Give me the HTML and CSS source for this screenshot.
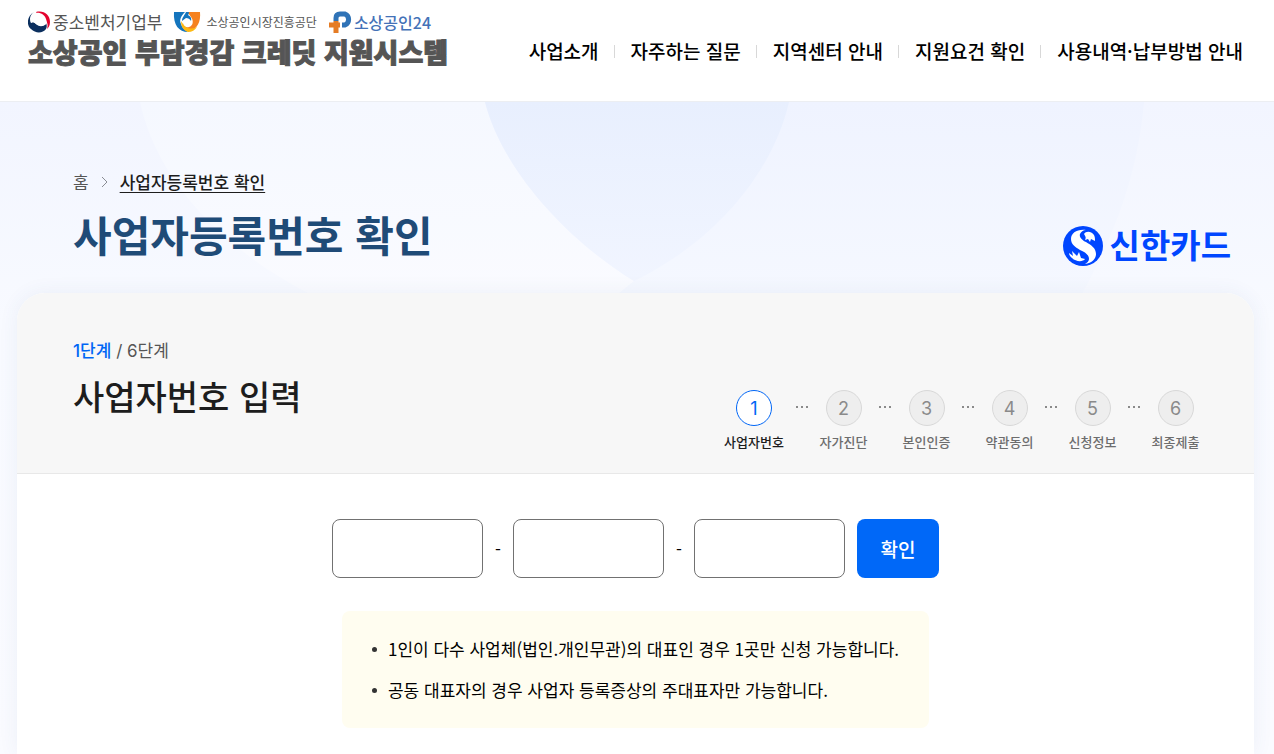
FILE: index.html
```html
<!DOCTYPE html>
<html lang="ko">
<head>
    <meta charset="UTF-8">
    <meta name="viewport" content="width=device-width, initial-scale=1.0">
    <title>소상공인 부담경감 크레딧 지원시스템</title>
    <link rel="stylesheet" href="styles.css">
</head>
<body>
    <header class="header">
        <div class="brand">
            <div class="agencies">
                <a href="#" class="agency agency-mss">
                    <svg width="22" height="22" viewBox="0 0 22 22" aria-hidden="true">
                        <path fill="#e4032e" d="M8 1C16-1 22 4 22 11c0 4-2 6-3 7 1-3 1-7-2-9L9 3z"/>
                        <path fill="#0b2f5e" d="M6 1C-1 5-2 14 3 18c5 5 12 4 15 0 1-2 1-4 0-6-2 4-7 4-10 1-2-2-4-2-5-1C1 8 2 4 6 1z"/>
                        <path fill="#fff" d="M3 12C2 7 4 3 8 2c4-1 9 2 10 6 1 2 1 5-1 6-3 2-6 1-9-1-2-2-4-2-5-1z"/>
                    </svg>
                    중소벤처기업부
                </a>
                <a href="#" class="agency agency-semas">
                    <svg width="28" height="22" viewBox="0 0 28 22" aria-hidden="true">
                        <path fill="#1475bd" d="M1 1h11c-4 4-6 8-4 12 1 4 4 6 7 8C6 21 0 14 1 1z"/>
                        <path fill="#1475bd" d="M17 1h-4c-1 3-4 5-4 9l4-3c2 0 4 1 5 3 1-3-1-5-3-6z"/>
                        <path fill="#f58220" d="M27 1H16c-1 2 1 3 2 5 3 4 2 9-2 10-3 1-6-1-6-4-1 5 3 9 7 8 7-2 11-9 10-19z"/>
                        <path fill="#fdb913" d="M8 10c0 5 2 9 7 11 4 0 7-2 9-5-4 2-8 2-11 0-2-1-3-3-5-6z"/>
                    </svg>
                    소상공인시장진흥공단
                </a>
                <a href="#" class="agency agency-sbiz">
                    <svg width="25" height="23" viewBox="0 0 25 23" aria-hidden="true">
                        <path fill="none" stroke="#2f73b7" stroke-width="5" d="M8 10V7q0-4 4-4h5a6 6 0 0 1 0 11h-3"/>
                        <path fill="none" stroke="#e57c25" stroke-width="5" d="M1 14h11M8 10v12"/>
                    </svg>
                    소상공인24
                </a>
            </div>
            <a href="#" class="system-name">소상공인 부담경감 크레딧 지원시스템</a>
        </div>
        <nav class="nav">
            <a href="#">사업소개</a>
            <a href="#">자주하는 질문</a>
            <a href="#">지역센터 안내</a>
            <a href="#">지원요건 확인</a>
            <a href="#">사용내역·납부방법 안내</a>
        </nav>
    </header>

    <main class="main">
        <svg class="backdrop" viewBox="0 0 1274 360" preserveAspectRatio="xMidYMin slice" aria-hidden="true">
            <defs>
                <linearGradient id="fadeLeft" x1="0" y1="0" x2="0" y2="1">
                    <stop offset="0" stop-color="#f5f8ff"/>
                    <stop offset="1" stop-color="#fafbff"/>
                </linearGradient>
                <linearGradient id="fadeRight" x1="0" y1="0" x2="0" y2="1">
                    <stop offset="0" stop-color="#eff3ff"/>
                    <stop offset="1" stop-color="#f5f8ff"/>
                </linearGradient>
                <linearGradient id="fadeCenter" x1="0" y1="0" x2="0" y2="1">
                    <stop offset="0" stop-color="#e8effe"/>
                    <stop offset="1" stop-color="#f1f5ff"/>
                </linearGradient>
            </defs>
            <path fill="url(#fadeLeft)" d="M140 0C156 76 220 146 310 192H618L634 179C715 140 773 70 789 0z"/>
            <path fill="url(#fadeRight)" d="M485 0C503 70 570 140 634 179L618 192H1082C1110 140 1137 80 1144 0z"/>
            <path fill="url(#fadeCenter)" d="M485 0C503 70 570 140 634 179C715 140 773 70 789 0z"/>
        </svg>

        <div class="page-head">
            <div>
                <nav class="breadcrumb">
                    <a href="#">홈</a>
                    <svg width="7" height="12" viewBox="0 0 7 12" aria-hidden="true">
                        <path fill="none" stroke="#8a8d94" d="M1 1l5 5-5 5"/>
                    </svg>
                    <a href="#" class="current">사업자등록번호 확인</a>
                </nav>
                <h1>사업자등록번호 확인</h1>
            </div>
            <div class="card-logo">
                <svg width="40" height="40" viewBox="0 0 40 40" aria-hidden="true">
                    <circle cx="20" cy="20" r="20" fill="#0046ff"/>
                    <path fill="#fff" d="M23 4C14 3 8 7 8 13c0 5 4 8 9 11 5 2 9 5 9 9 0 2-2 4-4 5 7-1 11-5 11-10 0-6-5-9-10-12-4-2-7-5-6-8 1-2 3-4 6-4z"/>
                    <path fill="#fff" d="M21 8c2-3 7-3 10 1 1 2 1 4 1 6l-4-2-1 3-2-3-3 1c1-2 1-3-1-6zM6 27l4 3-1-5 5 5 2-4 2 6 4 1c-2 3-9 3-13-1-2-2-3-3-3-5z"/>
                </svg>
                <span>신한카드</span>
            </div>
        </div>

        <section class="panel">
            <div class="panel-head">
                <div>
                    <p class="step-count"><strong>1단계</strong> / 6단계</p>
                    <h2>사업자번호 입력</h2>
                </div>
                <ol class="steps">
                    <li class="active"><span class="num">1</span>사업자번호</li>
                    <li><span class="num">2</span>자가진단</li>
                    <li><span class="num">3</span>본인인증</li>
                    <li><span class="num">4</span>약관동의</li>
                    <li><span class="num">5</span>신청정보</li>
                    <li><span class="num">6</span>최종제출</li>
                </ol>
            </div>

            <form class="biz-form">
                <input type="text" maxlength="3" inputmode="numeric" aria-label="사업자등록번호 앞 3자리">
                <span class="dash">-</span>
                <input type="text" maxlength="2" inputmode="numeric" aria-label="사업자등록번호 가운데 2자리">
                <span class="dash">-</span>
                <input type="text" maxlength="5" inputmode="numeric" aria-label="사업자등록번호 뒤 5자리">
                <button type="button">확인</button>
            </form>

            <ul class="notice">
                <li>1인이 다수 사업체(법인.개인무관)의 대표인 경우 1곳만 신청 가능합니다.</li>
                <li>공동 대표자의 경우 사업자 등록증상의 주대표자만 가능합니다.</li>
            </ul>
        </section>
    </main>
</body>
</html>
```
FILE: styles.css
```css
* {
    margin: 0;
    padding: 0;
    box-sizing: border-box;
}

body {
    font-family: "Noto Sans CJK KR", sans-serif;
    font-size: 17px;
    line-height: 24px;
    color: #1d1d1d;
    background: #fff;
    min-height: 100vh;
    display: flex;
    flex-direction: column;
}

a {
    color: inherit;
    text-decoration: none;
}

/* header */
.header {
    display: flex;
    justify-content: space-between;
    height: 102px;
    padding: 10px 31px 0 28px;
    border-bottom: 1px solid #eceef2;
    white-space: nowrap;
}

.agencies {
    display: flex;
    align-items: center;
    gap: 11px;
    color: #555;
}

.agency {
    display: flex;
    align-items: center;
    gap: 3px;
}

.agency-mss {
    font-size: 17px;
}

.agency-semas {
    gap: 5px;
    font-size: 12px;
}

.agency-sbiz {
    gap: 1px;
    font-size: 16px;
    font-weight: 500;
    color: #4472b8;
}

.system-name {
    display: block;
    font-size: 27px;
    line-height: 36px;
    font-weight: 900;
    color: #555;
    -webkit-text-stroke: 1px #555;
}

.nav {
    display: flex;
    align-self: flex-start;
    padding-top: 29px;
    font-size: 19px;
    font-weight: 500;
    color: #000;
}

.nav a {
    display: flex;
    align-items: center;
}

.nav a + a::before {
    content: "";
    width: 1px;
    height: 13px;
    margin: 0 16px 0 15px;
    background: #d8d8d8;
}

/* page heading */
.main {
    position: relative;
    flex: 1;
    display: flex;
    flex-direction: column;
    padding: 0 20px 0 17px;
    background: linear-gradient(#f2f5ff, #f8faff 220px, #fafbff);
    overflow: hidden;
}

.backdrop {
    position: absolute;
    top: 0;
    left: 0;
    width: 100%;
    height: 360px;
}

.page-head {
    position: relative;
    display: flex;
    justify-content: space-between;
    align-items: flex-end;
    padding: 68px 23px 27px 56px;
}

.breadcrumb {
    display: flex;
    align-items: center;
    gap: 12px;
    color: #555;
}

.breadcrumb .current {
    color: #1d1d1d;
    font-weight: 500;
    text-decoration: underline;
    text-underline-offset: 3px;
}

h1 {
    margin: 10px 0 2px;
    font-size: 42px;
    line-height: 60px;
    font-weight: 700;
    color: #1f4b77;
}

.card-logo {
    display: flex;
    align-items: center;
    gap: 7px;
    font-size: 33px;
    line-height: 36px;
    font-weight: 700;
    color: #0046ff;
}

.card-logo span {
    padding-bottom: 4px;
}

/* panel */
.panel {
    position: relative;
    flex: 1;
    background: #fff;
    border-radius: 28px 28px 0 0;
    box-shadow: 0 0 20px rgba(60, 80, 140, 0.07);
    overflow: hidden;
}

.panel-head {
    display: flex;
    justify-content: space-between;
    align-items: flex-end;
    height: 181px;
    padding: 0 37px 22px 56px;
    background: #f7f7f7;
    border-bottom: 1px solid #e8e8e8;
}

.step-count {
    font-family: Inter, "Noto Sans CJK KR", sans-serif;
    color: #555;
}

.step-count strong {
    font-weight: 500;
    color: #0066f5;
}

h2 {
    margin: 9px 0 31px;
    font-size: 34px;
    line-height: 48px;
    font-weight: 500;
}

.steps {
    display: flex;
    list-style: none;
    font-size: 13px;
    line-height: 18px;
    font-weight: 500;
    color: #6d6d6d;
}

.steps li {
    position: relative;
    width: 83px;
    text-align: center;
}

.steps .active {
    width: 96px;
    color: #1d1d1d;
}

.num {
    display: block;
    width: 36px;
    height: 36px;
    margin: 0 auto 7px;
    border: 1px solid #d8d8d8;
    border-radius: 50%;
    background: #eee;
    font-family: Inter, sans-serif;
    font-size: 18px;
    font-weight: 400;
    line-height: 36px;
    color: #8a8a8a;
}

.active .num {
    border-color: #0066f5;
    background: #fff;
    color: #0066f5;
}

/* three dots between two steps */
.steps li + li::before {
    content: "";
    position: absolute;
    top: 16px;
    left: -6px;
    width: 12px;
    height: 2px;
    background: repeating-linear-gradient(90deg, #8a8a8a 0 2px, transparent 2px 5px);
}

/* form */
.biz-form {
    display: flex;
    justify-content: center;
    align-items: center;
    padding-top: 45px;
}

.biz-form input {
    width: 151px;
    height: 59px;
    padding: 0 16px;
    border: 1px solid #717171;
    border-radius: 8px;
    font: inherit;
}

.dash {
    width: 30px;
    text-align: center;
    color: #000;
}

.biz-form button {
    width: 82px;
    height: 59px;
    margin-left: 12px;
    border: none;
    border-radius: 8px;
    background: #0068f8;
    color: #fff;
    font: inherit;
    font-size: 19px;
    font-weight: 500;
    cursor: pointer;
}

.notice {
    display: grid;
    gap: 17px;
    width: fit-content;
    margin: 33px auto 0;
    padding: 26px 30px;
    border-radius: 8px;
    background: #fffdf0;
    color: #000;
    list-style: none;
}

.notice li {
    display: flex;
    align-items: center;
    gap: 11px;
}

.notice li::before {
    content: "";
    width: 5px;
    height: 5px;
    border-radius: 50%;
    background: #333;
}
```
